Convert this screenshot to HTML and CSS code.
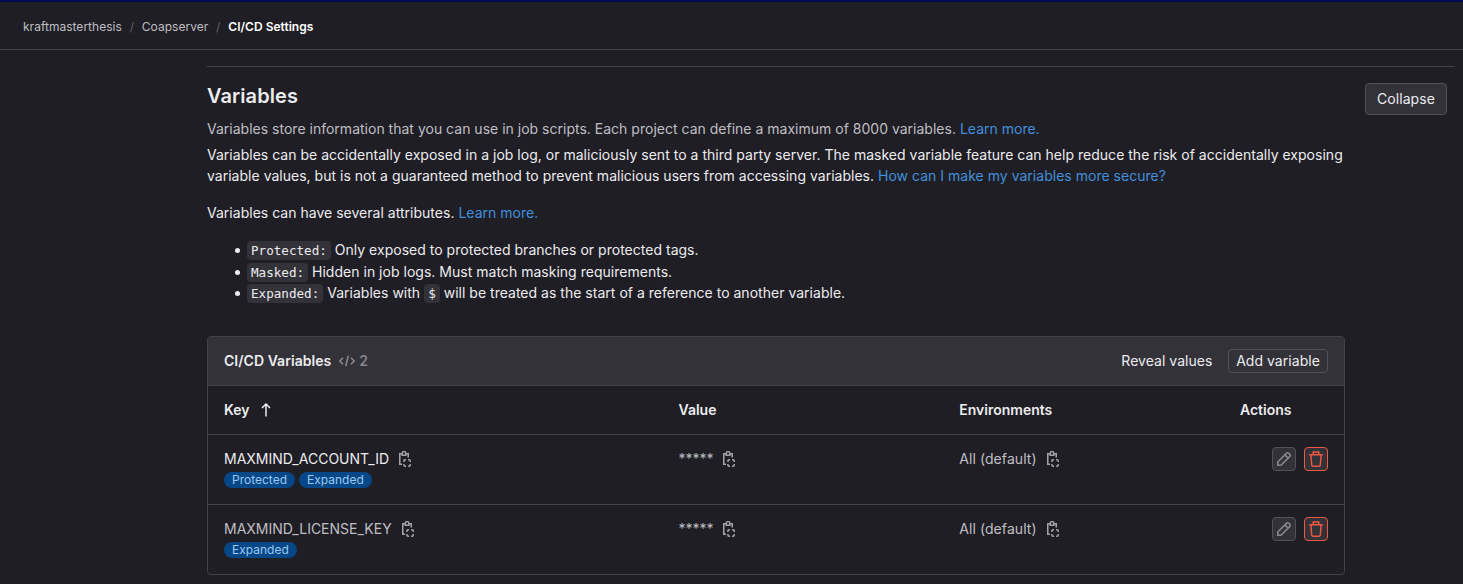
FILE: index.html
```
<!DOCTYPE html>
<html lang="en">
<head>
<meta charset="utf-8">
<title>CI/CD Settings</title>
<link rel="stylesheet" href="styles.css">
</head>
<body>
<svg width="0" height="0" class="defs">
  <symbol id="copy" viewBox="0 0 16 16"><path d="M5 2.75H2.75v10.5H5M9 2.75h2.25V6.5" /><path d="M5.25 4.25h3.6V2.4a1.7 1.7 0 0 0-3.6 0z"/><path d="M6.9 11V9.9q0-1.15 1.15-1.15h1M11.1 8.75h1q1.15 0 1.15 1.15V11M13.25 13v1.1q0 1.15-1.15 1.15h-1M9.05 15.25h-1q-1.15 0-1.15-1.15V13"/></symbol>
  <symbol id="pencil" viewBox="0 0 16 16"><path d="M1.75 14.25v-3.2l8.9-8.9a1.4 1.4 0 0 1 2 0l1.2 1.2a1.4 1.4 0 0 1 0 2l-8.9 8.9zM9 4l3 3"/></symbol>
  <symbol id="trash" viewBox="0 0 16 16"><path d="M1.2 3.75h13.6M5.25 3.5V.95h5.5V3.5M2.9 4l.8 10a1.3 1.3 0 0 0 1.3 1.2h6a1.3 1.3 0 0 0 1.3-1.2l.8-10"/></symbol>
</svg>
<header class="topbar">
  <nav class="crumbs"><span>kraftmasterthesis</span><i>/</i><span>Coapserver</span><i>/</i><b>CI/CD Settings</b></nav>
</header>
<main class="section">
  <div class="intro">
    <div>
      <h2>Variables</h2>
      <p class="muted">Variables store information that you can use in job scripts. Each project can define a maximum of 8000 variables. <a>Learn more.</a></p>
    </div>
    <button class="btn collapse">Collapse</button>
  </div>
  <div class="content">
    <p>Variables can be accidentally exposed in a job log, or maliciously sent to a third party server. The masked variable feature can help reduce the risk of accidentally exposing<br>variable values, but is not a guaranteed method to prevent malicious users from accessing variables. <a>How can I make my variables more secure?</a></p>
    <p>Variables can have several attributes. <a>Learn more.</a></p>
    <ul>
      <li><code>Protected:</code> Only exposed to protected branches or protected tags.</li>
      <li><code>Masked:</code> Hidden in job logs. Must match masking requirements.</li>
      <li><code>Expanded:</code> Variables with <code>$</code> will be treated as the start of a reference to another variable.</li>
    </ul>
    <section class="card">
      <div class="card-head">
        <b>CI/CD Variables</b>
        <svg class="code-icon" viewBox="0 0 16 16"><path d="M4 4.7.9 8 4 11.3M12 4.7 15.1 8 12 11.3M9.3 2.8 6.7 13.2"/></svg>
        <b class="count">2</b>
        <span class="reveal">Reveal values</span>
        <button class="btn small">Add variable</button>
      </div>
      <div class="row head"><div>Key<svg class="arrow" viewBox="0 0 10 14"><path d="M5 13.5V1.5M1 5l4-4 4 4"/></svg></div><div>Value</div><div>Environments</div><div>Actions</div></div>
      <div class="row">
        <div class="bright"><div class="cell">MAXMIND_ACCOUNT_ID<svg class="copy"><use href="#copy"/></svg></div><div class="badges"><span>Protected</span><span>Expanded</span></div></div>
        <div><div class="cell stars"><span>*****</span><svg class="copy"><use href="#copy"/></svg></div></div>
        <div><div class="cell env">All (default)<svg class="copy"><use href="#copy"/></svg></div></div>
        <div class="actions"><button class="icon"><svg><use href="#pencil"/></svg></button><button class="icon danger"><svg><use href="#trash"/></svg></button></div>
      </div>
      <div class="row">
        <div><div class="cell">MAXMIND_LICENSE_KEY<svg class="copy"><use href="#copy"/></svg></div><div class="badges"><span>Expanded</span></div></div>
        <div><div class="cell stars"><span>*****</span><svg class="copy"><use href="#copy"/></svg></div></div>
        <div><div class="cell env">All (default)<svg class="copy"><use href="#copy"/></svg></div></div>
        <div class="actions"><button class="icon"><svg><use href="#pencil"/></svg></button><button class="icon danger"><svg><use href="#trash"/></svg></button></div>
      </div>
    </section>
  </div>
</main>
</body>
</html>
```
FILE: styles.css
```
* { box-sizing: border-box; }
body { margin: 0; height: 584px; overflow: hidden; background: #1f1e24; color: #ececef; font: 14px/21px Inter, "Liberation Sans", sans-serif; white-space: nowrap; }
.defs { display: block; }
svg { fill: none; stroke: currentColor; stroke-width: 1.5; flex: none; }
a { color: #428fdc; }
p, h2, ul { margin: 0; }
p, li { letter-spacing: .018px; }
b { font-weight: 600; }
.topbar { height: 50px; border-top: 2px solid #030a55; border-bottom: 1px solid #434248; padding: 14px 23px 0; }
.crumbs { display: flex; font-size: 12px; color: #bfbfc3; letter-spacing: .02px; }
.crumbs i { width: 20px; text-align: center; font-style: normal; color: #626168; }
.crumbs b { color: #fff; }
.section { margin: 16px 8px 0 207px; border-top: 1px solid #434248; }
.intro { height: 77px; display: flex; justify-content: space-between; padding: 16px 8px 0 0; }
h2 { font-size: 20px; line-height: 26px; font-weight: 600; margin-bottom: 9px; letter-spacing: .08px; }
.muted { color: #bfbfc3; letter-spacing: .008px; }
.btn { font: inherit; color: #ececef; border: 1px solid #535158; border-radius: 4px; padding: 0; }
.collapse { width: 82px; height: 32px; background: #333238; padding-bottom: 2px; letter-spacing: .05px; }
.content { width: 1138px; }
.content > p { margin-bottom: 16px; }
ul { padding-left: 40px; list-style: none; }
li { height: 21.5px; position: relative; }
li::before { content: ""; position: absolute; left: -12px; top: 9px; width: 5px; height: 5px; border-radius: 50%; background: #ececef; }
code { font: 12.6px/17px "DejaVu Sans Mono", monospace; letter-spacing: 0; background: #333238; border-radius: 4px; padding: 2px 4px; }
.card { margin-top: 32px; border: 1px solid #434248; border-radius: 4px; height: 239px; overflow: hidden; }
.card-head { height: 49px; background: #333238; border-bottom: 1px solid #434248; padding: 0 16px; display: flex; align-items: center; letter-spacing: .04px; }
.code-icon { width: 16px; height: 16px; margin: 0 4px 0 8px; color: #89888d; }
.count { color: #89888d; }
.reveal { margin-left: auto; margin-right: 15.5px; }
.small { width: 100px; height: 24px; background: #333238; letter-spacing: .04px; }
.row { display: grid; grid-template-columns: 454.5px 280.8px 280.7px 1fr; padding: 12px 16px 0; height: 70px; color: #bfbfc3; border-bottom: 1px solid #434248; }
.row:last-child { border: 0; }
.head { height: 49px; padding-top: 13px; color: #ececef; font-weight: 600; }
.arrow { width: 10px; height: 14px; margin-left: 11px; vertical-align: -2px; }
.bright { color: #ececef; }
.cell { height: 24px; display: flex; align-items: center; }
.copy { width: 16px; height: 16px; margin-left: 8px; color: #a4a3a8; }
.stars .copy { margin-left: 7.5px; }
.stars span { width: 35px; }
.env { letter-spacing: .07px; }
.badges { display: flex; gap: 4px; margin-top: 1px; }
.badges span { font-size: 12px; line-height: 16px; background: #064787; color: #9dc7f1; border-radius: 8px; padding: 0 8px; }
.actions { display: flex; gap: 8px; justify-content: flex-end; }
.icon { width: 24px; height: 24px; padding: 3px; background: #333238; border: 1px solid #535158; border-radius: 4px; color: #89888d; }
.icon svg { display: block; width: 16px; height: 16px; }
.danger { color: #ec5941; border-color: #ec5941; }
```
